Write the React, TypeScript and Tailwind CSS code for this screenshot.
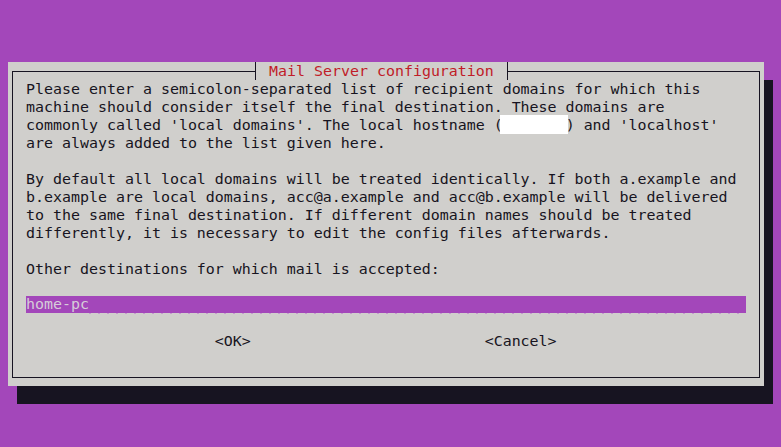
const mono = { fontFamily: "'DejaVu Sans Mono', 'Liberation Mono', monospace" };

const para1 = [
  "Please enter a semicolon-separated list of recipient domains for which this",
  "machine should consider itself the final destination. These domains are",
];

const para2 = [
  "By default all local domains will be treated identically. If both a.example and",
  "b.example are local domains, acc@a.example and acc@b.example will be delivered",
  "to the same final destination. If different domain names should be treated",
  "differently, it is necessary to edit the config files afterwards.",
];

function Line({ children }: { children?: React.ReactNode }) {
  return <div className="h-[18px] leading-[18px] whitespace-pre">{children}</div>;
}

export default function App() {
  return (
    <div
      style={mono}
      className="w-[781px] h-[447px] bg-[#a347ba] pt-[62px] pl-[8px] overflow-hidden text-[14.95px] text-[#171421]"
    >
      {/* dialog window with terminal shadow */}
      <div className="w-[756px] h-[324px] bg-[#d0cfcc] shadow-[9px_18px_0_#171421] pt-[9px] px-[4px] pb-[8px]">
        <div className="relative h-full border border-[#171421] pt-[8px] pl-[13px]">
          {/* title over the top border */}
          <div className="absolute left-[238px] top-[-10px] flex h-[18px]">
            <span className="w-[5px] h-[18px] border-r border-[#171421]" />
            <span className="h-[18px] bg-[#d0cfcc] pl-[13px] pr-[13px] leading-[18px] text-[#c01c28]">
              Mail Server configuration
            </span>
            <span className="w-[5px] h-[18px] border-l border-[#171421]" />
          </div>

          {para1.map((l) => (
            <Line key={l}>{l}</Line>
          ))}
          <Line>
            commonly called 'local domains'. The local hostname (
            <span className="inline-block align-top w-[68px] h-[19px] mt-[-1px] ml-[-3px] mr-[-2px] bg-white" />
            ) and 'localhost'
          </Line>
          <Line>are always added to the list given here.</Line>
          <Line />
          {para2.map((l) => (
            <Line key={l}>{l}</Line>
          ))}
          <Line />
          <Line>Other destinations for which mail is accepted:</Line>
          <Line />
          <div className="flex w-[720px] h-[18px]">
            <span className="h-[17px] leading-[17px] bg-[#a347ba] text-[#d6cdd8]">home-pc</span>
            <div className="flex-1 flex flex-col">
              <div className="h-[17px] bg-[#a347ba]" />
              <div className="h-[1px] bg-[repeating-linear-gradient(90deg,#c49bcd_0_2px,transparent_2px_9px)]" />
            </div>
          </div>
          <Line />
          <Line>{"                     <OK>                          <Cancel>"}</Line>
        </div>
      </div>
    </div>
  );
}
